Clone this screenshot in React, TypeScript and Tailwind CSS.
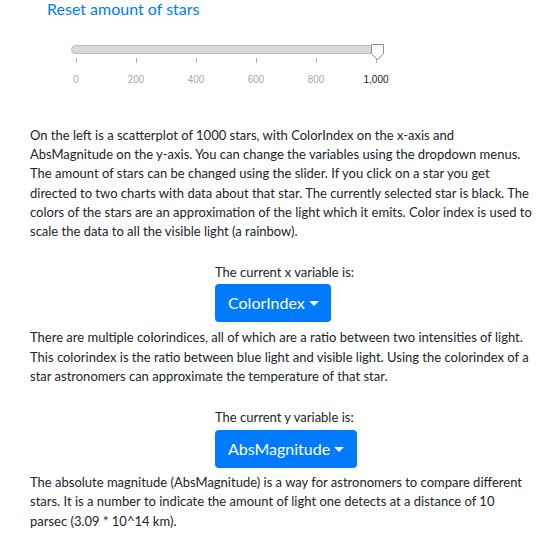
import React from "react";

const ticks = ["0", "200", "400", "600", "800", "1,000"];

function DropButton({ label, width }: { label: string; width: string }) {
  return (
    <div
      className={`${width} h-[38px] flex items-center pl-[13px] rounded-[4px] bg-[#007bff] text-white text-[16px] leading-[24px] whitespace-nowrap`}
    >
      <span>{label}</span>
      <span className="ml-[4px] mt-[1px] w-0 h-0 border-t-[5px] border-t-white border-x-[5px] border-x-transparent" />
    </div>
  );
}

export default function App() {
  return (
    <div className="w-[551px] h-[560px] overflow-hidden bg-white text-[#212529] font-['Lato','Open_Sans',sans-serif]">
      <div className="pl-[47px] text-[16px] leading-[17px] text-[#007bff]">Reset amount of stars</div>

      {/* slider */}
      <div className="mt-[28px] pl-[71px]">
        <div className="relative w-[312px] h-[9px] rounded-full bg-[#dadada] border border-[#bdbdbd]">
          <svg
            className="absolute left-[299px] top-[-2px]"
            width="14"
            height="17"
            viewBox="0 0 14 17"
          >
            <path d="M0.5 0.5 H12.5 V10 L6.5 15.5 L0.5 10 Z" fill="#ffffff" stroke="#8f8f8f" strokeWidth="1" />
          </svg>
        </div>
      </div>
      <div className="mt-[4px] pl-[46px] flex">
        {ticks.map((t) => (
          <div key={t} className="w-[60px] flex justify-center">
            <div className="w-px h-[5px] bg-[#b3b3b3]" />
          </div>
        ))}
      </div>
      <div className="mt-[11px] pl-[46px] flex font-['Liberation_Sans',Arial,sans-serif] text-[10px] leading-[12px]">
        {ticks.map((t, i) => (
          <div
            key={t}
            className={`w-[60px] text-center ${i === 5 ? "text-[#222222]" : "text-[#a9a9a9]"}`}
          >
            {t}
          </div>
        ))}
      </div>

      <div className="pl-[30px] text-[13px] leading-[19.2px] whitespace-nowrap">
        <p className="mt-[40px]">
          On the left is a scatterplot of 1000 stars, with ColorIndex on the x-axis and
          <br />
          AbsMagnitude on the y-axis. You can change the variables using the dropdown menus.
          <br />
          The amount of stars can be changed using the slider. If you click on a star you get
          <br />
          directed to two charts with data about that star. The currently selected star is black. The
          <br />
          colors of the stars are an approximation of the light which it emits. Color index is used to
          <br />
          scale the data to all the visible light (a rainbow).
        </p>

        <div className="ml-[185px] mt-[22px]">
          <div>The current x variable is:</div>
          <div className="mt-[2px]">
            <DropButton label="ColorIndex" width="w-[116px]" />
          </div>
        </div>

        <p className="mt-[6px]">
          There are multiple colorindices, all of which are a ratio between two intensities of light.
          <br />
          This colorindex is the ratio between blue light and visible light. Using the colorindex of a
          <br />
          star astronomers can approximate the temperature of that star.
        </p>

        <div className="ml-[185px] mt-[22px]">
          <div>The current y variable is:</div>
          <div className="mt-[3px]">
            <DropButton label="AbsMagnitude" width="w-[142px]" />
          </div>
        </div>

        <p className="mt-[5px]">
          The absolute magnitude (AbsMagnitude) is a way for astronomers to compare different
          <br />
          stars. It is a number to indicate the amount of light one detects at a distance of 10
          <br />
          parsec (3.09 * 10^14 km).
        </p>
      </div>
    </div>
  );
}
